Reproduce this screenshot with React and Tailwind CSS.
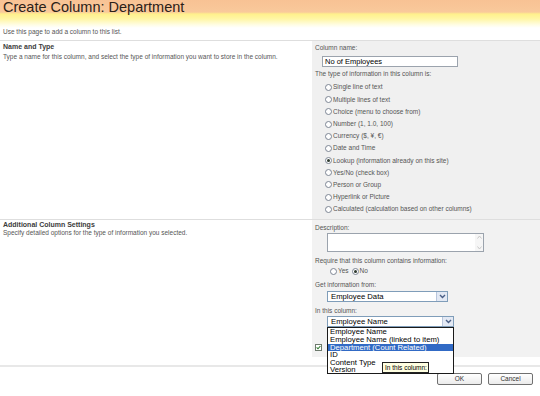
import React from "react";

// column types shown in the radio list
const types = [
  "Single line of text",
  "Multiple lines of text",
  "Choice (menu to choose from)",
  "Number (1, 1.0, 100)",
  "Currency ($, ¥, €)",
  "Date and Time",
  "Lookup (information already on this site)",
  "Yes/No (check box)",
  "Person or Group",
  "Hyperlink or Picture",
  "Calculated (calculation based on other columns)",
];

const options = [
  "Employee Name",
  "Employee Name (linked to item)",
  "Department (Count Related)",
  "ID",
  "Content Type",
  "Version",
];

const Radio = ({ checked }) => (
  <span className="w-[7px] h-[7px] rounded-full border border-[#7d8694] bg-white flex items-center justify-center shrink-0">
    {checked && <span className="w-[3px] h-[3px] rounded-full bg-[#2e3a2e]" />}
  </span>
);

const Chevron = () => (
  <span className="w-[11px] h-full bg-[#e3e9f4] border-l border-[#b9c6dc] flex items-center justify-center">
    <svg width="7" height="5" viewBox="0 0 7 5">
      <path d="M1 1 L3.5 3.5 L6 1" fill="none" stroke="#4a5f86" strokeWidth="1.4" />
    </svg>
  </span>
);

export default function App() {
  return (
    <div className="w-[540px] h-[396px] bg-white overflow-hidden font-['Liberation_Sans',Arial,sans-serif] text-[#555]">
      {/* Title band */}
      <div className="h-[28px] bg-[linear-gradient(180deg,#f8c294_0px,#f9c99b_12px,#fff08c_14px,#fff6a6_19px,#fffde6_25px,#ffffff_28px)]">
        <h1 className="pl-[3px] text-[14.5px] leading-[14px] text-[#2b2118]">Create Column: Department</h1>
      </div>

      <div className="h-[12px] px-[3px] text-[6.5px] leading-[8px] -mt-[0.5px]">
        Use this page to add a column to this list.
      </div>

      {/* Name and Type */}
      <div className="flex border-t border-[#dedede] h-[179px]">
        <div className="w-[312px] px-[3px] pt-[1px]">
          <div className="text-[7px] leading-[9px] font-bold text-[#3c3c3c]">Name and Type</div>
          <div className="mt-[2.5px] text-[6.5px] leading-[8px]">
            Type a name for this column, and select the type of information you want to store in the column.
          </div>
        </div>
        <div className="flex-1 bg-[#f0f0f0] pl-[3px] pt-[3.5px] text-[6.5px]">
          <div className="leading-[8px]">Column name:</div>
          <div className="mt-[3.5px] ml-[7px] w-[136px] h-[11px] border border-[#9ba3ad] bg-white pl-[2px] text-[7.5px] leading-[9px] text-black">
            No of Employees
          </div>
          <div className="mt-[3.5px] leading-[8px]">The type of information in this column is:</div>
          <div className="mt-[3.4px]">
            {types.map((t, i) => (
              <div key={t} className="h-[12.2px] flex items-center gap-[1px] pl-[10px]">
                <Radio checked={i === 6} />
                <span className="leading-[8px]">{t}</span>
              </div>
            ))}
          </div>
        </div>
      </div>

      {/* Additional Column Settings */}
      <div className="flex border-t border-[#dedede] h-[138px]">
        <div className="w-[312px] px-[3px] pt-[0.5px]">
          <div className="text-[7px] leading-[9px] font-bold text-[#3c3c3c]">Additional Column Settings</div>
          <div className="text-[6.5px] leading-[8px]">
            Specify detailed options for the type of information you selected.
          </div>
        </div>
        <div className="flex-1 bg-[#f2f2f2] pl-[3px] pt-[4.5px] text-[6.5px]">
          <div className="leading-[8px]">Description:</div>
          <div className="mt-[0.5px] ml-[12px] w-[157px] h-[19px] border border-[#9ba3ad] bg-white flex justify-end">
            <div className="w-[8px] h-full bg-[#f6f6f6] flex flex-col justify-between items-center py-[1px]">
              <svg width="5" height="4" viewBox="0 0 5 4"><path d="M0.5 3.5 L2.5 1 L4.5 3.5" fill="none" stroke="#c8c8c8" /></svg>
              <svg width="5" height="4" viewBox="0 0 5 4"><path d="M0.5 0.5 L2.5 3 L4.5 0.5" fill="none" stroke="#c8c8c8" /></svg>
            </div>
          </div>
          <div className="mt-[5.2px] leading-[8px]">Require that this column contains information:</div>
          <div className="mt-[1.8px] h-[10px] ml-[15px] flex items-center gap-[1px]">
            <Radio />
            <span className="leading-[8px] mr-[2px]">Yes</span>
            <Radio checked />
            <span className="leading-[8px]">No</span>
          </div>
          <div className="mt-[4.5px] leading-[8px]">Get information from:</div>
          <div className="mt-[2.5px] ml-[12px] w-[121px] h-[11px] border border-[#7f9db9] bg-white flex justify-between text-[7.7px] text-black">
            <span className="pl-[3px] leading-[9px]">Employee Data</span>
            <Chevron />
          </div>
          <div className="mt-[4.5px] leading-[8px]">In this column:</div>
          <div className="relative mt-[1.5px] ml-[12px] w-[127px]">
            <div className="h-[11px] border border-[#7f9db9] bg-white flex justify-between text-[7.7px] text-black">
              <span className="pl-[3px] leading-[9px]">Employee Name</span>
              <Chevron />
            </div>
            {/* open dropdown list */}
            <div className="absolute left-0 top-full z-10 w-[127px] h-[47px] border border-[#1a1a1a] bg-white text-[7.7px] text-black">
              {options.map((o, i) => (
                <div
                  key={o}
                  className={
                    i === 2
                      ? "h-[7.6px] leading-[7.6px] pl-[2px] bg-[#316ac5] text-white"
                      : "h-[7.6px] leading-[7.6px] pl-[2px]"
                  }
                >
                  {o}
                </div>
              ))}
              <div className="absolute left-[54px] top-[34px] w-[47px] h-[11px] border border-[#222] bg-[#ffffe1] text-[6.5px] leading-[9px] pl-[2px] text-black">
                In this column:
              </div>
            </div>
          </div>
          <div className="mt-[17px] w-[7px] h-[7px] border border-[#6d7a6d] bg-white flex items-center justify-center">
            <svg width="5" height="5" viewBox="0 0 5 5">
              <path d="M0.6 2.4 L2 3.8 L4.4 1" fill="none" stroke="#2f7a2f" strokeWidth="1.1" />
            </svg>
          </div>
        </div>
      </div>

      {/* footer */}
      <div className="mt-[8px] h-[2px] bg-[#e8e8e8]" />
      <div className="mt-[6px] flex justify-end gap-[6px] pr-[7px]">
        <button className="w-[45px] h-[12px] border border-[#707070] rounded-[2px] bg-[linear-gradient(180deg,#ffffff,#ebebeb)] text-[6.5px] leading-[10px] text-[#333]">
          OK
        </button>
        <button className="w-[45px] h-[12px] border border-[#707070] rounded-[2px] bg-[linear-gradient(180deg,#ffffff,#ebebeb)] text-[6.5px] leading-[10px] text-[#333]">
          Cancel
        </button>
      </div>
    </div>
  );
}
